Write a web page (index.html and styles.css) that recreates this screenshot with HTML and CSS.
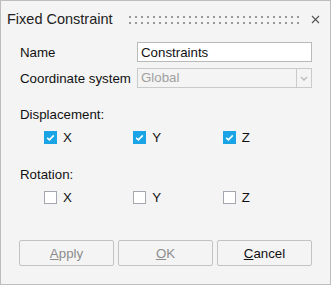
FILE: index.html
```html
<!DOCTYPE html>
<html lang="en">
<head>
    <meta charset="UTF-8">
    <title>Fixed Constraint</title>
    <link rel="stylesheet" href="styles.css">
</head>
<body>
    <div class="dialog">
        <div class="title-bar">
            <span class="title">Fixed Constraint</span>
            <span class="grip"></span>
            <span class="close">
                <svg width="9" height="9" viewBox="0 0 9 9"><path d="M1 1L8 8M8 1L1 8" stroke="#555" stroke-width="1.1" fill="none"/></svg>
            </span>
        </div>

        <div class="content">
            <div class="fields">
                <label class="field-label" for="name">Name</label>
                <input class="text-input" id="name" type="text" value="Constraints">

                <label class="field-label">Coordinate system</label>
                <div class="select disabled">
                    <span class="select-value">Global</span>
                    <span class="select-arrow">
                        <svg width="8" height="5" viewBox="0 0 8 5"><path d="M1 1L4 4L7 1" stroke="#bdbdbd" stroke-width="1.5" fill="none"/></svg>
                    </span>
                </div>
            </div>

            <div class="group group-first">
                <div class="group-title">Displacement:</div>
                <div class="check-row">
                    <div class="check-item"><span class="box checked"><svg width="13" height="13" viewBox="0 0 13 13"><path d="M3.2 6.8L5.4 8.8L9.8 4.4" stroke="#fff" stroke-width="1.6" fill="none"/></svg></span>X</div>
                    <div class="check-item"><span class="box checked"><svg width="13" height="13" viewBox="0 0 13 13"><path d="M3.2 6.8L5.4 8.8L9.8 4.4" stroke="#fff" stroke-width="1.6" fill="none"/></svg></span>Y</div>
                    <div class="check-item"><span class="box checked"><svg width="13" height="13" viewBox="0 0 13 13"><path d="M3.2 6.8L5.4 8.8L9.8 4.4" stroke="#fff" stroke-width="1.6" fill="none"/></svg></span>Z</div>
                </div>
            </div>

            <div class="group group-second">
                <div class="group-title">Rotation:</div>
                <div class="check-row">
                    <div class="check-item"><span class="box"></span>X</div>
                    <div class="check-item"><span class="box"></span>Y</div>
                    <div class="check-item"><span class="box"></span>Z</div>
                </div>
            </div>
        </div>

        <div class="buttons">
            <button class="button" disabled><u>A</u>pply</button>
            <button class="button" disabled><u>O</u>K</button>
            <button class="button"><u>C</u>ancel</button>
        </div>
    </div>
</body>
</html>
```

FILE: styles.css
```css
body {
    margin: 0;
    padding: 0;
    font-family: "Liberation Sans", Arial, sans-serif;
    font-size: 13.3px;
    color: #111;
    background-color: #f4f4f4;
}

.dialog {
    width: 331px;
    height: 285px;
    box-sizing: border-box;
    border: 1px solid #bdbdbd;
    background-color: #f4f4f4;
}

/* Title bar */
.title-bar {
    height: 36px;
    display: flex;
    align-items: center;
    padding-left: 6px;
    padding-right: 10px;
}

.title {
    font-size: 14.5px;
    color: #222;
}

/* two rows of small dots used as a drag handle */
.grip {
    flex: 1;
    height: 8px;
    margin: 1px 12px 0 14px;
    background-image: radial-gradient(circle, #999 0.9px, transparent 1.1px);
    background-size: 6px 6px;
    background-position: 0 -2px;
}

.close {
    width: 9px;
    height: 9px;
    display: flex;
}

/* Fields */
.content {
    padding: 5px 18px 0 19px;
}

.fields {
    display: grid;
    grid-template-columns: 117px 1fr;
    grid-auto-rows: 20px;
    row-gap: 6px;
    align-items: center;
}

.field-label {
    white-space: nowrap;
}

.text-input {
    height: 20px;
    box-sizing: border-box;
    border: 1px solid #b9b9b9;
    background: #fff;
    font-family: inherit;
    font-size: 13.3px;
    color: #111;
    padding: 0 3px;
    outline: none;
    margin: 0;
    width: 100%;
}

.select {
    height: 20px;
    box-sizing: border-box;
    border: 1px solid #cacaca;
    display: flex;
    align-items: stretch;
}

.select-value {
    flex: 1;
    padding-left: 3px;
    color: #a0a0a0;
    line-height: 18px;
}

.select-arrow {
    width: 14px;
    border-left: 1px solid #cacaca;
    display: flex;
    align-items: center;
    justify-content: center;
    padding-top: 1px;
}

/* Checkbox groups */
.group-first {
    margin-top: 19px;
}

.group-second {
    margin-top: 23px;
}

.group-title {
    line-height: 16px;
}

.check-row {
    display: flex;
    margin-top: 8px;
    padding-left: 24px;
    height: 13px;
}

.check-item {
    width: 91px;
    display: flex;
    align-items: center;
    line-height: 13px;
}

.box {
    width: 13px;
    height: 13px;
    box-sizing: border-box;
    border: 1px solid #a3a7ae;
    background: #fff;
    margin-right: 6px;
    display: flex;
}

.box.checked {
    border: none;
    background: #1aa4e6;
}

/* Buttons */
.buttons {
    display: grid;
    grid-template-columns: repeat(3, 1fr);
    gap: 4px;
    margin: 36px 18px 0 18px;
}

.button {
    height: 26px;
    border: 1px solid #c3c3c3;
    border-radius: 2px;
    background: #f4f4f4;
    font-family: inherit;
    font-size: 13.3px;
    color: #111;
    padding: 0;
}

.button:disabled {
    color: #8c8c8c;
}
```
